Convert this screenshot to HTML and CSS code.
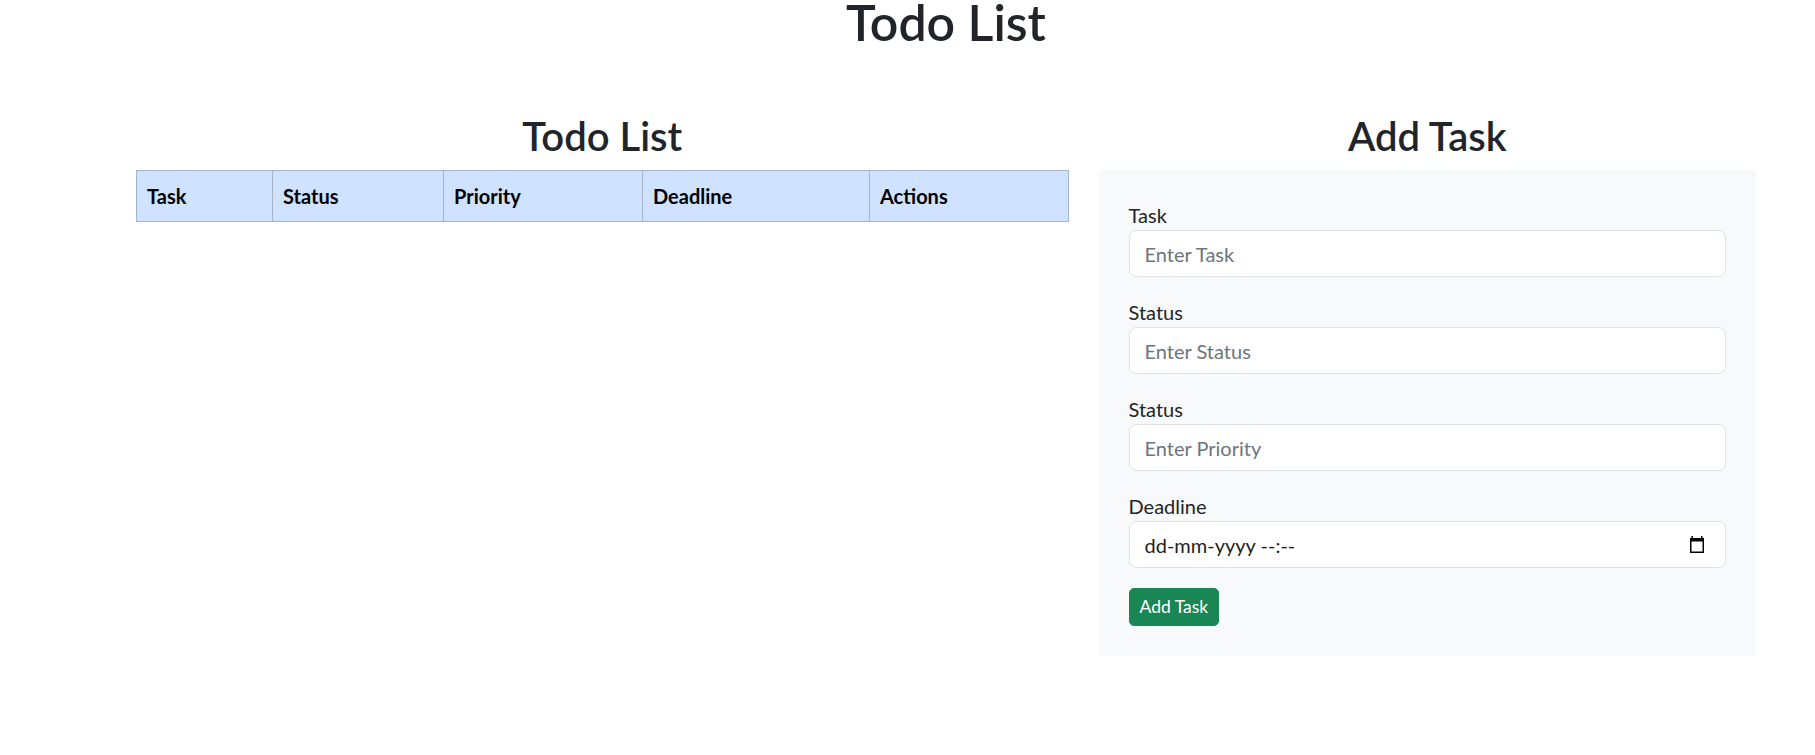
FILE: index.html
```html
<!DOCTYPE html>
<html lang="en">
<head>
<meta charset="utf-8">
<title>Todo List</title>
<link rel="stylesheet" href="styles.css">
</head>
<body>
<div class="container">
  <h1 class="page-title">Todo List</h1>
  <div class="row">
    <div class="col-list">
      <h2 class="section-title">Todo List</h2>
      <table class="todo-table">
        <thead>
          <tr>
            <th class="c-task">Task</th>
            <th class="c-status">Status</th>
            <th class="c-priority">Priority</th>
            <th class="c-deadline">Deadline</th>
            <th class="c-actions">Actions</th>
          </tr>
        </thead>
        <tbody></tbody>
      </table>
    </div>
    <div class="col-form">
      <h2 class="section-title">Add Task</h2>
      <form class="panel">
        <div class="group">
          <label class="label" for="task">Task</label>
          <input class="control" id="task" type="text" placeholder="Enter Task">
        </div>
        <div class="group">
          <label class="label" for="status">Status</label>
          <input class="control" id="status" type="text" placeholder="Enter Status">
        </div>
        <div class="group">
          <label class="label" for="priority">Status</label>
          <input class="control" id="priority" type="text" placeholder="Enter Priority">
        </div>
        <div class="group">
          <label class="label">Deadline</label>
          <div class="control date-control">
            <span class="date-text">dd-mm-yyyy --:--</span>
            <svg class="cal-icon" width="14" height="17" viewBox="0 0 14 17" aria-hidden="true">
              <rect x="0.75" y="2.75" width="12.5" height="13.5" fill="none" stroke="#000" stroke-width="1.5"/>
              <rect x="0" y="2" width="14" height="3.5" fill="#000"/>
              <rect x="1.5" y="0" width="1.5" height="3" fill="#000"/>
              <rect x="11" y="0" width="1.5" height="3" fill="#000"/>
            </svg>
          </div>
        </div>
        <button class="btn-add" type="button">Add Task</button>
      </form>
    </div>
  </div>
</div>
</body>
</html>
```
FILE: styles.css
```css
* { box-sizing: border-box; }

body {
  margin: 0;
  font-family: Lato, "Noto Sans", sans-serif;
  font-size: 20px;
  line-height: 1.5;
  color: #212529;
  background: #fff;
}

.container {
  width: 1650px;
  margin: 0 0 0 121px;
}

.page-title {
  margin: 0;
  text-align: center;
  font-size: 50px;
  line-height: 45px;
  font-weight: 600;
}

.row {
  display: flex;
  margin-top: 67px;
}

.col-list {
  width: 962.5px;
  padding: 0 15px;
}

.col-form {
  width: 687.5px;
  padding: 0 15px;
}

.section-title {
  margin: 0 0 10px;
  text-align: center;
  font-size: 40px;
  line-height: 1.2;
  font-weight: 600;
}

.todo-table {
  width: 100%;
  border-collapse: collapse;
  table-layout: fixed;
}

.todo-table th {
  padding: 10px;
  text-align: left;
  font-weight: 700;
  font-size: 20px;
  line-height: 30px;
  color: #000;
  background: #cfe2ff;
  border: 1px solid #a6b5cc;
}

.c-task { width: 136px; }
.c-status { width: 171px; }
.c-priority { width: 199px; }
.c-deadline { width: 227px; }

.panel {
  background: #f8f9fa;
  padding: 30px;
}

.group {
  margin-bottom: 20px;
}

.label {
  display: block;
  font-size: 20px;
  line-height: 30px;
}

.control {
  display: block;
  width: 100%;
  height: 47px;
  padding: 7.5px 15px;
  font-family: inherit;
  font-size: 20px;
  line-height: 30px;
  color: #212529;
  background: #fff;
  border: 1px solid #dee2e6;
  border-radius: 7.5px;
  outline: none;
}

.control::placeholder {
  color: #6c757d;
  opacity: 1;
}

.date-control {
  display: flex;
  align-items: center;
  justify-content: space-between;
  padding-right: 21px;
}

.date-text {
  color: #1f1f1f;
}

.cal-icon {
  display: block;
}

.btn-add {
  display: inline-block;
  height: 38px;
  padding: 5px 10px;
  font-family: inherit;
  font-size: 17.5px;
  line-height: 26px;
  color: #fff;
  background: #198754;
  border: 1px solid #198754;
  border-radius: 5px;
  cursor: pointer;
}
```
